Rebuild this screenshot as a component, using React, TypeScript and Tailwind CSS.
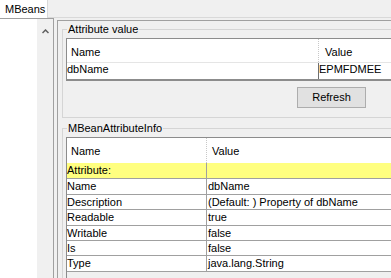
import React from 'react';

const infoRows = [
  { name: 'Attribute:', value: '', h: 'h-[16px]', bg: 'bg-[#ffff80]' },
  { name: 'Name', value: 'dbName', h: 'h-[16px]', bg: 'bg-white' },
  { name: 'Description', value: '(Default: ) Property of dbName', h: 'h-[15px]', bg: 'bg-white' },
  { name: 'Readable', value: 'true', h: 'h-[16px]', bg: 'bg-white' },
  { name: 'Writable', value: 'false', h: 'h-[15px]', bg: 'bg-white' },
  { name: 'Is', value: 'false', h: 'h-[15px]', bg: 'bg-white' },
  { name: 'Type', value: 'java.lang.String', h: 'h-[16px]', bg: 'bg-white' },
];

const App: React.FC = () => {
  return (
    <div className="w-[391px] h-[278px] overflow-hidden bg-[#f0f0f0] text-black text-[11px] leading-[13px] font-['Liberation_Sans',Arial,sans-serif] flex flex-col">
      {/* tab strip */}
      <div className="h-[18px] flex shrink-0">
        <div className="w-[48px] bg-white border-r border-[#d9d9d9] flex items-center pl-[5px]">MBeans</div>
        <div className="flex-1 border-b border-[#d9d9d9]" />
      </div>

      <div className="flex flex-1 min-h-0">
        {/* tree pane with scrollbar */}
        <div className="w-[54px] shrink-0 flex border-t border-r border-[#a0a0a0]">
          <div className="w-[37px] bg-white" />
          <div className="w-[16px] flex justify-center pt-[10px]">
            <svg width="7" height="5" viewBox="0 0 7 5">
              <path d="M0.5 4 L3.5 1 L6.5 4" fill="none" stroke="#606060" strokeWidth="1.5" />
            </svg>
          </div>
        </div>

        <div className="w-[3px] shrink-0" />

        {/* attribute pane */}
        <div className="flex-1 mt-[2px] border-t border-l border-[#a0a0a0] pl-[4px] min-w-0">
          <fieldset className="mt-[1px] w-[400px] border border-[#d5d5d5] pl-[3px] pb-[9px]">
            <legend className="ml-[1px] px-[1px] leading-[14px]">Attribute value</legend>
            <div className="mt-[2px] bg-white border-t border-l border-b-2 border-[#8c8c8c]">
              <div className="flex h-[24px] border-b border-[#e5e5e5]">
                <div className="w-[251px] pl-[4px] pt-[7px]">Name</div>
                <div className="flex-1 border-l border-dotted border-[#c8c8c8] pl-[6px] pt-[7px]">Value</div>
              </div>
              <div className="flex h-[16px]">
                <div className="w-[251px]">dbName</div>
                <div className="flex-1 border-l border-[#6e6e6e]">EPMFDMEE</div>
              </div>
            </div>
            <div className="mt-[6px] pl-[231px] flex">
              <button className="w-[69px] h-[21px] border border-[#adadad] bg-[#e1e1e1] flex items-center justify-center">
                Refresh
              </button>
            </div>
          </fieldset>

          <fieldset className="mt-[3px] w-[400px] h-[200px] border border-[#d5d5d5] pl-[3px] flex flex-col">
            <legend className="ml-[1px] px-[1px] leading-[14px]">MBeanAttributeInfo</legend>
            <div className="mt-[2px] flex-1 border-t border-l border-[#8c8c8c] bg-[#f0f0f0]">
              <div className="flex h-[25px] bg-white">
                <div className="w-[139px] pl-[4px] pt-[7px]">Name</div>
                <div className="flex-1 border-l border-dotted border-[#c8c8c8] pl-[5px] pt-[7px]">Value</div>
              </div>
              {infoRows.map((r) => (
                <div key={r.name} className={`flex border-b border-[#a0a0a0] ${r.h} ${r.bg}`}>
                  <div className="w-[139px] pt-[1px]">{r.name}</div>
                  <div className="flex-1 border-l border-[#a0a0a0] pl-[1px] pt-[1px]">{r.value}</div>
                </div>
              ))}
            </div>
          </fieldset>
        </div>
      </div>
    </div>
  );
};

export default App;
